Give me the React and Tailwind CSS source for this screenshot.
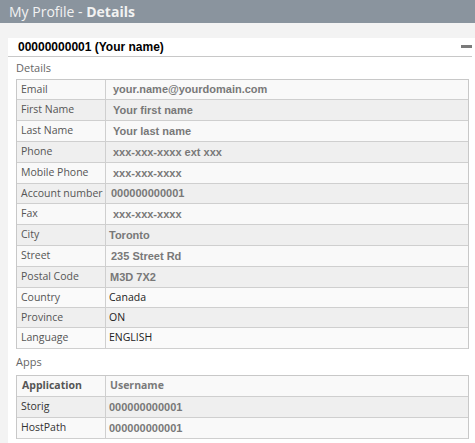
import React from "react";

const rows = [
  { label: "Email", value: "your.name@yourdomain.com", kind: "px", bg: "bg-[#f9f9f9]", h: "h-[20px]", pl: "pl-[7px]" },
  { label: "First Name", value: "Your first name", kind: "px", bg: "bg-[#efefef]", h: "h-[21px]", pl: "pl-[7px]" },
  { label: "Last Name", value: "Your last name", kind: "px", bg: "bg-[#f9f9f9]", h: "h-[21px]", pl: "pl-[7px]" },
  { label: "Phone", value: "xxx-xxx-xxxx ext xxx", kind: "px", bg: "bg-[#efefef]", h: "h-[21px]", pl: "pl-[7px]" },
  { label: "Mobile Phone", value: "xxx-xxx-xxxx", kind: "px", bg: "bg-[#f9f9f9]", h: "h-[21px]", pl: "pl-[7px]" },
  { label: "Account number", value: "000000000001", kind: "px", bg: "bg-[#efefef]", h: "h-[20px]", pl: "pl-[5px]", top: true },
  { label: "Fax", value: "xxx-xxx-xxxx", kind: "px", bg: "bg-[#f9f9f9]", h: "h-[21px]", pl: "pl-[7px]" },
  { label: "City", value: "Toronto", kind: "px", bg: "bg-[#efefef]", h: "h-[21px]", pl: "pl-[3px]" },
  { label: "Street", value: "235 Street Rd", kind: "px", bg: "bg-[#f9f9f9]", h: "h-[21px]", pl: "pl-[5px]" },
  { label: "Postal Code", value: "M3D 7X2", kind: "px", bg: "bg-[#efefef]", h: "h-[21px]", pl: "pl-[4px]" },
  { label: "Country", value: "Canada", kind: "n", bg: "bg-[#fafafa]", h: "h-[20px]", pl: "pl-[3px]" },
  { label: "Province", value: "ON", kind: "n", bg: "bg-[#efefef]", h: "h-[20px]", pl: "pl-[3px]" },
  { label: "Language", value: "ENGLISH", kind: "n", bg: "bg-[#fafafa]", h: "h-[21px]", pl: "pl-[3px]" },
];

const sans = "font-['Open_Sans',sans-serif]";
const pxf = "font-['Liberation_Sans',Arial,sans-serif] font-bold text-[11px] text-[#787878]";

export default function App() {
  return (
    <div className="w-[475px] h-[443px] bg-[#f3f3f3] overflow-hidden">
      <div className={`h-[23px] bg-[#8a949e] pl-[9px] flex items-center text-[14px] text-[#f2f2f2] ${sans}`}>
        <span>My Profile -&nbsp;</span>
        <span className="font-bold">Details</span>
      </div>
      <div className="pt-[15px] pl-[8px]">
        <div className="bg-white h-[405px] flex flex-col">
          <div className="mr-[3px] h-[19px] border-b border-[#c8c8c8] flex items-center justify-between pl-[10px]">
            <span className="font-['Liberation_Sans',Arial,sans-serif] font-bold text-[12px] text-black leading-none">
              00000000001 (Your name)
            </span>
            <span className="w-[11px] h-[3px] bg-[#7a7a7a] mb-[1px]"></span>
          </div>
          <div className={`h-[22px] pl-[8px] flex items-center text-[11px] text-[#666] ${sans}`}>Details</div>
          <div className="ml-[8px] w-[453px] border border-b-0 border-[#c8c8c8]">
            {rows.map((r) => (
              <div key={r.label} className={`flex ${r.h} ${r.bg} border-b border-[#cfcfcf]`}>
                <div className={`w-[89px] shrink-0 border-r border-[#cfcfcf] pl-[4px] flex items-center text-[10.5px] text-[#555] ${sans}`}>
                  {r.label}
                </div>
                <div
                  className={`flex-1 flex ${r.top ? "items-start pt-[1px]" : "items-center"} ${r.pl} ${
                    r.kind === "px" ? pxf : `text-[10.5px] text-[#222] ${sans}`
                  }`}
                >
                  {r.value}
                </div>
              </div>
            ))}
          </div>
          <div className={`h-[26px] pl-[8px] flex items-center text-[11px] text-[#666] ${sans}`}>Apps</div>
          <div className="ml-[8px] w-[453px] border border-b-0 border-[#c8c8c8]">
            <div className="flex h-[21px] bg-[#f9f9f9] border-b border-[#cfcfcf]">
              <div className={`w-[89px] shrink-0 border-r border-[#cfcfcf] pl-[5px] flex items-center text-[10.5px] font-bold text-[#555] ${sans}`}>
                Application
              </div>
              <div className={`flex-1 flex items-center pl-[4px] text-[10.5px] font-bold text-[#7a7a7a] ${sans}`}>Username</div>
            </div>
            <div className="flex h-[21px] bg-[#efefef] border-b border-[#cfcfcf]">
              <div className={`w-[89px] shrink-0 border-r border-[#cfcfcf] pl-[4px] flex items-center text-[10.5px] text-[#333] ${sans}`}>
                Storig
              </div>
              <div className={`flex-1 flex items-center pl-[3px] ${pxf}`}>000000000001</div>
            </div>
            <div className="flex h-[21px] bg-[#f9f9f9] border-b border-[#cfcfcf]">
              <div className={`w-[89px] shrink-0 border-r border-[#cfcfcf] pl-[4px] flex items-center text-[10.5px] text-[#333] ${sans}`}>
                HostPath
              </div>
              <div className={`flex-1 flex items-center pl-[3px] ${pxf}`}>000000000001</div>
            </div>
          </div>
        </div>
      </div>
    </div>
  );
}
